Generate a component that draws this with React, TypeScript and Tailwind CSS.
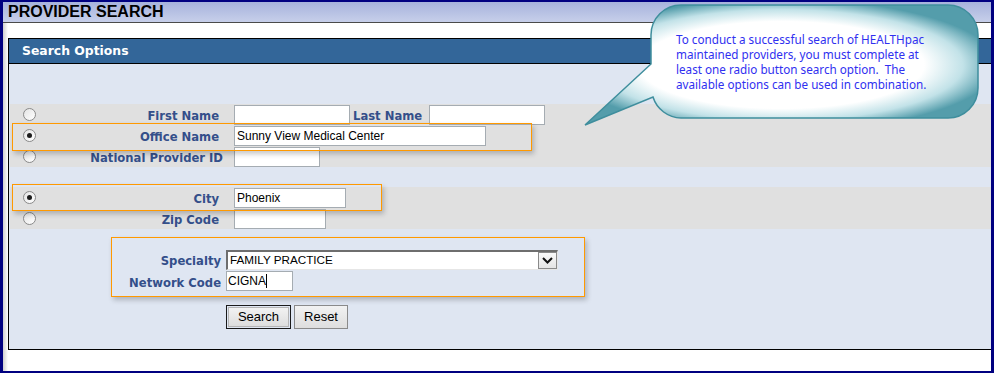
import React from "react";

const labelCls =
  "font-['DejaVu_Sans',Verdana,sans-serif] font-bold text-[11.6px] leading-[14px] pt-[3px] text-[#344f8a] whitespace-nowrap";

const inputCls =
  "h-[20px] bg-white border border-[#a5acb2] px-[2px] flex items-center font-['Liberation_Sans',Arial,sans-serif] text-[12px] text-black";

function Radio({ checked }: { checked?: boolean }) {
  return (
    <div className="w-[13px] h-[13px] rounded-full border border-[#8a8a8a] bg-gradient-to-br from-[#e4e4e4] to-white flex items-center justify-center shrink-0">
      {checked && <div className="w-[5px] h-[5px] rounded-full bg-[#1c1c1c]" />}
    </div>
  );
}

function Row({
  checked,
  label,
  labelPad = "pr-[4px]",
  children,
}: {
  checked?: boolean;
  label: string;
  labelPad?: string;
  children: React.ReactNode;
}) {
  return (
    <div className="h-[21px] flex items-center">
      <div className="w-[13px] ml-[13px]">
        <Radio checked={checked} />
      </div>
      <div className={`w-[187px] text-right ${labelPad} ${labelCls}`}>{label}</div>
      <div className="ml-[11px] flex items-center">{children}</div>
    </div>
  );
}

function Callout() {
  return (
    <div className="absolute left-[578px] top-0 w-[400px] h-[128px]">
      <svg width="400" height="128" viewBox="0 0 400 128" className="absolute inset-0">
        <defs>
          <radialGradient id="bub" cx="50%" cy="50%" r="55%">
            <stop offset="0" stopColor="#ffffff" />
            <stop offset="0.66" stopColor="#ffffff" />
            <stop offset="0.84" stopColor="#c2e2e8" />
            <stop offset="1" stopColor="#549dab" />
          </radialGradient>
        </defs>
        <path
          d="M 100 3 H 367 A 30 30 0 0 1 397 33 V 86 A 30 30 0 0 1 367 116 H 100 A 30 30 0 0 1 72 95 L 4 123 L 70 62 V 33 A 30 30 0 0 1 100 3 Z"
          fill="url(#bub)"
          stroke="#3f8e9d"
          strokeWidth="1.5"
        />
      </svg>
      <div className="absolute left-[95px] top-[30px] w-[295px] font-['Noto_Sans',Tahoma,sans-serif] text-[11.7px] leading-[15px] text-[#3030f0]">
        <div>To conduct a successful search of HEALTHpac</div>
        <div>maintained providers, you must complete at</div>
        <div>least one radio button search option.&nbsp; The</div>
        <div>available options can be used in combination.</div>
      </div>
    </div>
  );
}

export default function App() {
  return (
    <div className="relative w-[994px] h-[373px] bg-white border-t-2 border-b-2 border-l-[3px] border-r-[3px] border-[#000080] flex flex-col overflow-hidden">
      <div className="h-[20px] shrink-0 bg-gradient-to-b from-[#a7b3dc] to-[#c7cfea] pl-[5px] flex items-center font-['Liberation_Sans',Arial,sans-serif] font-bold text-[16px] text-black">
        PROVIDER SEARCH
      </div>
      <div className="h-px bg-[#4a4a4a] shrink-0" />
      <div className="flex flex-1">
        <div className="w-[5px] bg-gradient-to-r from-[#cfcfcf] to-white" />
        <div className="flex-1 pt-[15px] pb-[21px] flex flex-col">
          <div className="border-t border-l border-b border-black flex flex-col flex-1">
            <div className="h-[24px] bg-[#336699] border-b border-black box-content pl-[13px] flex items-center font-['DejaVu_Sans',Verdana,sans-serif] font-bold text-[12.4px] text-white">
              Search Options
            </div>
            <div className="relative flex-1 bg-[#dfe6f2] pt-[40px]">
              <div className="ml-px bg-[#e0e0e0]">
                <Row label="First Name">
                  <div className={`${inputCls} w-[116px]`} />
                  <div className={`${labelCls} ml-[3px] w-[76px]`}>Last Name</div>
                  <div className={`${inputCls} w-[116px]`} />
                </Row>
                <Row checked label="Office Name">
                  <div className={`${inputCls} w-[252px]`}>Sunny View Medical Center</div>
                </Row>
                <Row label="National Provider ID" labelPad="pr-0">
                  <div className={`${inputCls} w-[86px]`} />
                </Row>
              </div>
              <div className="ml-px mt-[20px] bg-[#e0e0e0]">
                <Row checked label="City">
                  <div className={`${inputCls} w-[112px]`}>Phoenix</div>
                </Row>
                <Row label="Zip Code">
                  <div className={`${inputCls} w-[92px]`} />
                </Row>
              </div>

              <div className="ml-[102px] mt-[8px] w-[474px] h-[60px] border border-[#ff9900] shadow-[2px_3px_5px_rgba(0,0,0,0.22)] pt-[11px]">
                <div className="h-[21px] flex items-center">
                  <div className={`w-[109px] text-right ${labelCls}`}>Specialty</div>
                  <div className="ml-[5px] w-[332px] h-[20px] flex items-stretch bg-white border-t-2 border-l-2 border-t-[#6e6e6e] border-l-[#6e6e6e] border-r border-b border-r-[#e6e6e6] border-b-[#e6e6e6]">
                    <div className="flex-1 pl-[2px] flex items-center font-['Liberation_Sans',Arial,sans-serif] text-[11.7px] text-black">
                      FAMILY PRACTICE
                    </div>
                    <div className="w-[19px] border border-[#8a8a8a] bg-gradient-to-b from-[#fafafa] to-[#e4e4e4] flex items-center justify-center">
                      <svg width="11" height="7" viewBox="0 0 11 7">
                        <path d="M1 1 L5.5 5.5 L10 1" fill="none" stroke="#111" strokeWidth="2" />
                      </svg>
                    </div>
                  </div>
                </div>
                <div className="h-[20px] mt-px flex items-center">
                  <div className={`w-[109px] text-right ${labelCls}`}>Network Code</div>
                  <div className={`${inputCls} w-[67px] ml-[5px] !px-px`}>
                    CIGNA<span className="inline-block w-px h-[14px] bg-black" />
                  </div>
                </div>
              </div>

              <div className="ml-[217px] mt-[8px] flex gap-[3px] font-['Liberation_Sans',Arial,sans-serif] text-[13px] text-black">
                <div className="w-[65px] h-[24px] border border-[#1a1a1a] p-px">
                  <div className="w-full h-full border border-[#b5b5b5] bg-gradient-to-b from-[#f2f2f2] to-[#dedede] flex items-center justify-center">
                    Search
                  </div>
                </div>
                <div className="w-[54px] h-[24px] border border-[#8a8a8a] bg-gradient-to-b from-[#f2f2f2] to-[#dedede] flex items-center justify-center">
                  Reset
                </div>
              </div>

              <div className="absolute left-[3px] top-[59px] w-[520px] h-[28px] border border-[#ff9900] shadow-[2px_3px_5px_rgba(0,0,0,0.22)]" />
              <div className="absolute left-[3px] top-[120px] w-[370px] h-[27px] border border-[#ff9900] shadow-[2px_3px_5px_rgba(0,0,0,0.22)]" />
            </div>
          </div>
        </div>
      </div>
      <Callout />
    </div>
  );
}
